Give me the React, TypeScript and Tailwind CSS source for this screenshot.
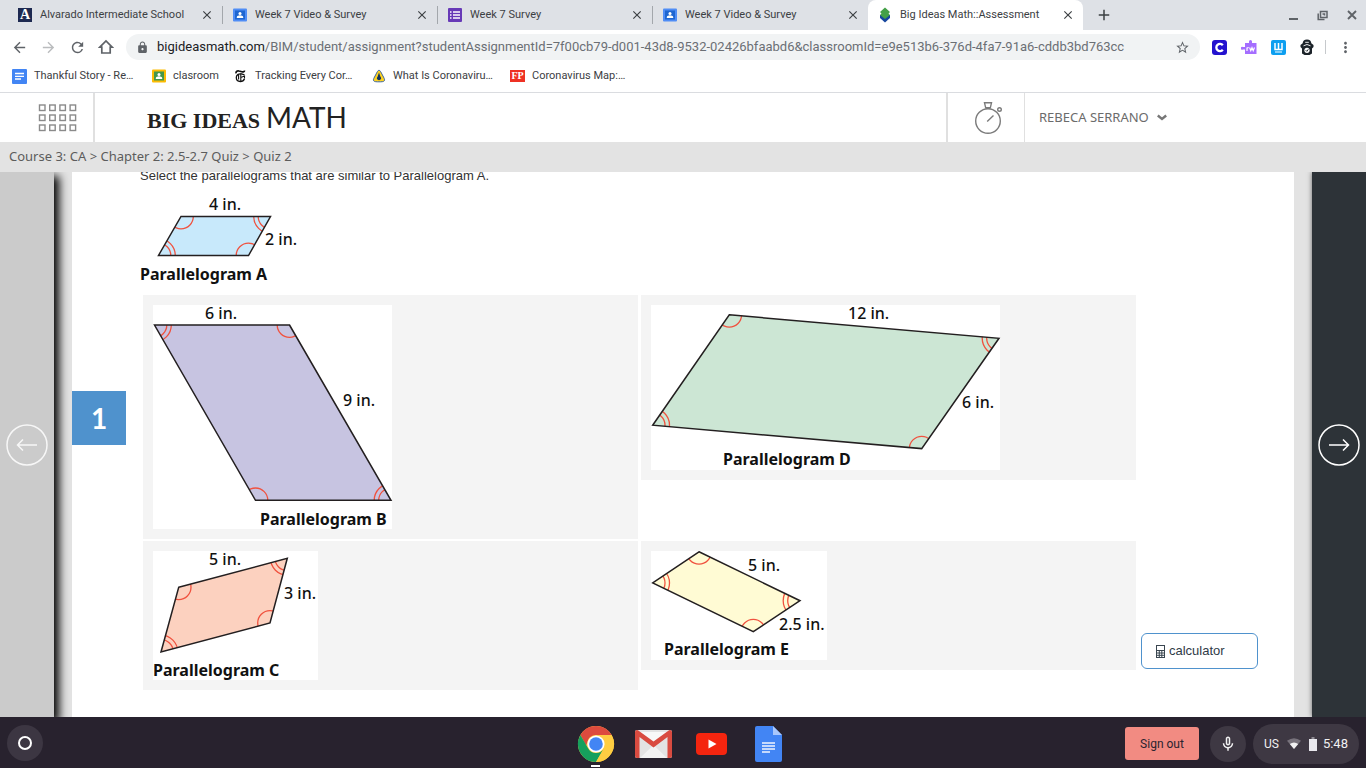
import React, { useState } from "react";
import {
  MdArrowBack,
  MdArrowForward,
  MdClose,
  MdAdd,
  MdRefresh,
  MdLock,
  MdStarBorder,
  MdMoreVert,
  MdOutlineMicNone,
} from "react-icons/md";

type Point = [number, number];

type Label = { x: number; y: number; text: string };

type FigureData = {
  name: string;
  width: number;
  height: number;
  fill: string;
  // The first and third points carry single arcs, the second and fourth double arcs.
  points: Point[];
  labels: Label[];
  caption: Label;
};

const figures: Record<string, FigureData> = {
  A: {
    name: "Parallelogram A",
    width: 162,
    height: 92,
    fill: "#c8e9fb",
    points: [[41, 21.5], [130.5, 21.5], [108.5, 60.5], [18.5, 60.5]],
    labels: [{ x: 69, y: 15, text: "4 in." }, { x: 125, y: 50, text: "2 in." }],
    caption: { x: 0, y: 85, text: "Parallelogram A" },
  },
  B: {
    name: "Parallelogram B",
    width: 239,
    height: 224,
    fill: "#c7c4e1",
    points: [[136.5, 20], [238, 195.3], [102.5, 195.3], [1.5, 20]],
    labels: [{ x: 52, y: 14, text: "6 in." }, { x: 190, y: 101, text: "9 in." }],
    caption: { x: 107, y: 220, text: "Parallelogram B" },
  },
  C: {
    name: "Parallelogram C",
    width: 165,
    height: 129,
    fill: "#fcd1bf",
    points: [[25.7, 36.3], [134.3, 7.3], [117, 72], [8, 101]],
    labels: [{ x: 56, y: 14, text: "5 in." }, { x: 131, y: 48, text: "3 in." }],
    caption: { x: 0, y: 125, text: "Parallelogram C" },
  },
  D: {
    name: "Parallelogram D",
    width: 349,
    height: 165,
    fill: "#cce6d4",
    points: [[78.3, 9.8], [348, 33.3], [270.7, 143.6], [1.7, 120.2]],
    labels: [{ x: 197, y: 14, text: "12 in." }, { x: 311, y: 103, text: "6 in." }],
    caption: { x: 72, y: 160, text: "Parallelogram D" },
  },
  E: {
    name: "Parallelogram E",
    width: 176,
    height: 109,
    fill: "#fffbd4",
    points: [[48, 0.8], [149, 49.7], [102.3, 80.7], [1.7, 32]],
    labels: [{ x: 97, y: 20, text: "5 in." }, { x: 128, y: 79, text: "2.5 in." }],
    caption: { x: 13, y: 104, text: "Parallelogram E" },
  },
};

function Figure({ data }: { data: FigureData }) {
  const clip = "clip-" + data.name.slice(-1);
  const outline = data.points.map((p) => p.join(",")).join(" ");
  return (
    <svg
      width={data.width}
      height={data.height}
      viewBox={`0 0 ${data.width} ${data.height}`}
      role="img"
      aria-label={data.name}
      className="block overflow-visible bg-white font-['Noto_Sans','Open_Sans',sans-serif]"
    >
      <clipPath id={clip}>
        <polygon points={outline} />
      </clipPath>
      <polygon points={outline} fill={data.fill} />
      <g clipPath={`url(#${clip})`} fill="none" stroke="#f0523f" strokeWidth="1.3">
        {data.points.map(([x, y], i) => (
          <g key={i}>
            <circle cx={x} cy={y} r="12.3" />
            {i % 2 === 1 && <circle cx={x} cy={y} r="16.8" />}
          </g>
        ))}
      </g>
      <polygon points={outline} fill="none" stroke="#231f20" strokeWidth="1.5" />
      {data.labels.map((l) => (
        <text key={l.text} x={l.x} y={l.y} fill="#111" className="text-[16px] font-medium">
          {l.text}
        </text>
      ))}
      <text x={data.caption.x} y={data.caption.y} fill="#111" className="text-[16px] font-bold">
        {data.caption.text}
      </text>
    </svg>
  );
}

/* ---------- favicons ---------- */

const AlvaradoIcon = () => (
  <span className="flex size-3.5 items-center justify-center bg-[#1d2951] font-['Liberation_Serif',serif] text-[14px] leading-none font-bold text-white">A</span>
);

const PersonIcon = ({ color, board }: { color: string; board: string }) => (
  <svg width="14" height="14" viewBox="0 0 14 14">
    <rect width="14" height="13" y=".5" rx="1" fill={board} />
    <rect x="2" y="2.5" width="10" height="9" fill={color} />
    <circle cx="7" cy="5.4" r="1.5" fill="#fff" />
    <path d="M3.8 10V9c0-1 1.8-1.7 3.2-1.7s3.2.7 3.2 1.7v1z" fill="#fff" />
  </svg>
);

const FormsIcon = () => (
  <svg width="14" height="14" viewBox="0 0 14 14">
    <rect width="14" height="14" rx="1" fill="#673ab7" />
    <path d="M2 4h1.5M5 4h7M2 7h1.5M5 7h7M2 10h1.5M5 10h7" stroke="#fff" strokeWidth="1.6" />
  </svg>
);

const BigIdeasIcon = () => (
  <svg width="14" height="16" viewBox="0 0 14 16">
    <path d="M7 15.5 2 11V8h10v3z" fill="#17479e" />
    <path d="M7 .5 2 5l1.5 1.6L2 8l5 4 5-4-1.5-1.4L12 5z" fill="#43a047" />
  </svg>
);

const DocsIcon = () => (
  <svg width="15" height="15" viewBox="0 0 15 15">
    <rect width="15" height="15" rx="1" fill="#4285f4" />
    <path d="M3 4.5h9M3 7.3h9M3 10h6" stroke="#fff" strokeWidth="1.3" />
  </svg>
);

const TimesIcon = () => (
  <svg width="11" height="14" viewBox="0 0 11 14" fill="none" stroke="#111">
    <path d="M1 4.300C.8 2.200 2.400 1.500 4 2l2.800.8c1.500.4 2.700 0 2.700-1.300" strokeWidth="1.700" />
    <path d="M9.500 5.800 6.500 4.900C3.500 4.300 1.300 6.200 1.300 8.600c0 2.300 1.700 3.900 4 3.900 2.100 0 3.600-1.200 4.200-2.800" strokeWidth="1.300" />
    <path d="M5.800 4.500v7.500M3.600 6v4.500M5.800 8.600l3.700-1.500v2.500" strokeWidth="1.100" />
  </svg>
);

const TriangleIcon = () => (
  <svg width="14" height="14" viewBox="0 0 14 14">
    <path d="M7 1.2c1 0 2 2 3.4 4.800 1.700 3 2.600 4.600 2 5.700-.8 1.200-3 1.100-5.400 1.100s-4.600.1-5.400-1.100c-.6-1.100.3-2.700 2-5.700C5 3.200 6 1.200 7 1.200z" fill="#ffd21f" stroke="#3b67a5" />
    <path d="M7 3.600 9.200 10H4.800z" fill="#12345f" />
    <circle cx="7" cy="9.300" r="1.900" fill="#12345f" />
  </svg>
);

const FpIcon = () => (
  <span className="flex h-3 w-[15px] items-center justify-center bg-[#ee3124] font-['Liberation_Serif',serif] text-[10px] leading-none font-bold text-white">FP</span>
);

/* ---------- browser frame ---------- */

const tabs = [
  { title: "Alvarado Intermediate School", icon: <AlvaradoIcon /> },
  { title: "Week 7 Video & Survey", icon: <PersonIcon board="#4f8df5" color="#1e66d0" /> },
  { title: "Week 7 Survey", icon: <FormsIcon /> },
  { title: "Week 7 Video & Survey", icon: <PersonIcon board="#4f8df5" color="#1e66d0" /> },
  { title: "Big Ideas Math::Assessment", icon: <BigIdeasIcon /> },
];

function TabStrip() {
  return (
    <div className="flex h-[30px] shrink-0 items-stretch bg-[#dee1e6] pl-2">
      {tabs.map((t, i) => {
        const active = i === tabs.length - 1;
        return (
          <div
            key={i}
            className={
              "flex w-[215px] items-center gap-2 pr-2 pl-2.5 " + (active ? "rounded-t-lg bg-white" : "")
            }
          >
            <span className="flex w-3.5 shrink-0 justify-center">{t.icon}</span>
            <a href="#" className="flex-1 truncate text-[11px] text-[#3c4043]">
              {t.title}
            </a>
            <button type="button" aria-label="Close tab" className="text-[14px] text-[#3c4043]">
              <MdClose />
            </button>
            {i < 3 && <span className="-mr-2 h-[18px] w-px bg-[#a3a7ac]" />}
          </div>
        );
      })}
      <button type="button" aria-label="New tab" className="ml-3 text-[18px] text-[#3c4043]">
        <MdAdd />
      </button>
      <div className="ml-auto flex items-center gap-[18px] pr-2 text-[#5f6368]">
        <button type="button" aria-label="Minimise">
          <svg width="11" height="12" viewBox="0 0 11 12">
            <path d="M1 10h9" stroke="currentColor" strokeWidth="2" />
          </svg>
        </button>
        <button type="button" aria-label="Restore">
          <svg width="11" height="11" viewBox="0 0 11 11" fill="none" stroke="currentColor" strokeWidth="1.5">
            <rect x="3.500" y="1.500" width="6.500" height="6" />
            <path d="M1.200 3.500v6h6.300M5.500 4h2v1.500" />
          </svg>
        </button>
        <button type="button" aria-label="Close window">
          <svg width="12" height="12" viewBox="0 0 12 12" stroke="currentColor" strokeWidth="1.900">
            <path d="m2 2 8 8M10 2l-8 8" />
          </svg>
        </button>
      </div>
    </div>
  );
}

function Extensions() {
  return (
    <div className="flex items-center gap-3.5">
      <button type="button" aria-label="Clever">
        <svg width="15" height="15" viewBox="0 0 15 15">
          <rect width="15" height="15" rx="3" fill="#2412cf" />
          <path d="M10.800 5.300A3.600 3.600 0 1 0 10.800 9.700" fill="none" stroke="#fff" strokeWidth="2.300" />
        </svg>
      </button>
      <button type="button" aria-label="Read and write">
        <svg width="16" height="16" viewBox="0 0 16 16">
          <path d="M4 4h4V2.500a1.500 1.500 0 1 1 3 0V4h4.500v11H4v-4.500H2a1.500 1.500 0 1 1 0-2.500h2z" fill="#a56eff" />
          <path d="M6 12V8.500M6 9.500q.5-1 1.700-1M8.600 8.500l1.200 3.200 1.200-3 1.200 3 1.300-3.200" fill="none" stroke="#fff" strokeWidth="1.200" />
        </svg>
      </button>
      <button type="button" aria-label="Reading tools">
        <svg width="15" height="15" viewBox="0 0 15 15">
          <rect width="15" height="15" rx="2" fill="#0d9ff0" />
          <path d="M4 3v6.500h7V3M7.500 3v6" fill="none" stroke="#fff" strokeWidth="1.500" />
          <path d="M4 12h7" stroke="#fff" />
        </svg>
      </button>
      <button type="button" aria-label="Guard">
        <svg width="14" height="16" viewBox="0 0 14 16">
          <path d="M7 .5c2.800 0 4.200 1.600 4.300 3.800L13.500 6v2L12 9.500v5L9.500 16h-5L2 14.500v-5L.5 8V6l2.200-1.700C2.800 2.100 4.200.5 7 .5z" fill="#1c2329" />
          <path d="M3.500 6.800Q7 4.200 10.500 6.800M5.200 3.300h3.600" fill="none" stroke="#fff" strokeWidth=".9" />
          <circle cx="7" cy="11.300" r="2.600" fill="#fff" />
          <path d="m5.800 11.300 1 1 1.500-2" fill="none" stroke="#1c2329" />
        </svg>
      </button>
    </div>
  );
}

function Toolbar() {
  return (
    <div className="flex h-[34px] shrink-0 items-center bg-white pr-3 pl-[11px]">
      <div className="flex items-center gap-3 text-[17px] text-[#5f6368]">
        <button type="button" aria-label="Back"><MdArrowBack /></button>
        <button type="button" aria-label="Forward" className="text-[#babcbe]"><MdArrowForward /></button>
        <button type="button" aria-label="Reload"><MdRefresh /></button>
        <button type="button" aria-label="Home">
          <svg width="16" height="16" viewBox="0 0 16 16" fill="none" stroke="currentColor" strokeWidth="1.700">
            <path d="M1.800 8.200 8 2l6.200 6.200h-2V14H3.800V8.200z" />
          </svg>
        </button>
      </div>
      <div className="ml-3 flex h-[26px] flex-1 items-center rounded-full bg-[#f1f3f4] pr-2.5 pl-2.5 text-[13px]">
        <MdLock className="mr-2 shrink-0 text-[#5f6368]" />
        <label htmlFor="address" className="text-[#202124]">bigideasmath.com</label>
        <input
          id="address"
          type="text"
          defaultValue="/BIM/student/assignment?studentAssignmentId=7f00cb79-d001-43d8-9532-02426bfaabd6&classroomId=e9e513b6-376d-4fa7-91a6-cddb3bd763cc"
          className="min-w-0 flex-1 bg-transparent text-[#6b6f74] outline-none"
        />
        <button type="button" aria-label="Bookmark this page" className="text-[15px] text-[#5f6368]">
          <MdStarBorder />
        </button>
      </div>
      <div className="ml-3">
        <Extensions />
      </div>
      <span className="mx-[11px] h-3.5 w-px bg-[#c6c9cc]" />
      <button type="button" aria-label="Browser menu" className="text-[17px] text-[#5f6368]">
        <MdMoreVert />
      </button>
    </div>
  );
}

const bookmarks = [
  { title: "Thankful Story - Re…", icon: <DocsIcon />, width: "w-[139px]" },
  { title: "clasroom", icon: <PersonIcon board="#fbbc04" color="#43964c" />, width: "w-[82px]" },
  { title: "Tracking Every Cor…", icon: <TimesIcon />, width: "w-[138px]" },
  { title: "What Is Coronaviru…", icon: <TriangleIcon />, width: "w-[139px]" },
  { title: "Coronavirus Map:…", icon: <FpIcon />, width: "w-[138px]" },
];

function Bookmarks() {
  return (
    <div className="flex h-[29px] shrink-0 items-start border-b border-[#dadce0] bg-white pt-1 pl-3">
      {bookmarks.map((b) => (
        <a key={b.title} href="#" className={"flex items-center gap-[7px] text-[11px] leading-4 whitespace-nowrap text-[#3c4043] " + b.width}>
          <span className="flex w-[15px] shrink-0 justify-center">{b.icon}</span>
          {b.title}
        </a>
      ))}
    </div>
  );
}

/* ---------- Big Ideas Math page ---------- */

function SiteHeader() {
  return (
    <header className="flex h-[49px] shrink-0 items-stretch bg-white">
      <button type="button" aria-label="Apps" className="flex w-[95px] items-center justify-end border-r-2 border-[#e0e0e0] pr-4">
        <svg width="39" height="28" viewBox="0 0 39 28" fill="none" stroke="#8a8a8a" strokeWidth="1.400">
          {[0, 1, 2].map((r) =>
            [0, 1, 2, 3].map((c) => <rect key={r + "-" + c} x={1.500 + c * 10.200} y={1 + r * 10} width="5.500" height="5.500" />)
          )}
        </svg>
      </button>
      <h1 className="ml-[52px] flex items-baseline gap-1.5 text-[#222] leading-[49px]">
        <span className="font-['Liberation_Serif',serif] text-[22px] font-bold">BIG IDEAS</span>
        <span className="font-['Lato',sans-serif] text-[28px]">MATH</span>
      </h1>
      <button type="button" aria-label="Timer" className="ml-auto flex w-[79px] items-center justify-center border-r border-l-2 border-[#e0e0e0]">
        <svg width="30" height="34" viewBox="0 0 30 34" fill="none" stroke="#7b7b7b" strokeWidth="1.400" className="ml-1.5">
          <circle cx="14" cy="20" r="12.300" />
          <path d="M10.500 1.800h7l-1.200 5h-4.600zM13 7v1M15 7v1M13.200 20.500l6.300-6" />
          <circle cx="25.500" cy="8.500" r="1.800" />
        </svg>
      </button>
      <button type="button" className="flex w-[341px] items-center gap-2 pl-3.5 font-['Noto_Sans','Open_Sans',sans-serif] text-[13px] text-[#6b6b6b]">
        REBECA SERRANO
        <svg width="10" height="7" viewBox="0 0 10 7" fill="none" stroke="#777" strokeWidth="2.400">
          <path d="m.8 1.500 4.200 3.500 4.200-3.500" />
        </svg>
      </button>
    </header>
  );
}

function Arrow({ back }: { back?: boolean }) {
  return (
    <svg width="42" height="42" viewBox="0 0 42 42" fill="none" stroke="currentColor" strokeWidth="1.500">
      <circle cx="21" cy="21" r="20" />
      {back ? <path d="M31 21H12M17 15.500 11.500 21l5.500 5.500" /> : <path d="M11 21h19M25 15.500l5.500 5.500-5.500 5.500" />}
    </svg>
  );
}

function Choice({ data }: { data: FigureData }) {
  const [picked, setPicked] = useState(false);
  return (
    <button
      type="button"
      aria-pressed={picked}
      onClick={() => setPicked(!picked)}
      className={"p-2.5 " + (picked ? "bg-[#d5e6f5]" : "bg-[#f4f4f4]")}
    >
      <Figure data={data} />
    </button>
  );
}

function Assessment() {
  return (
    <main className="flex min-h-0 flex-1 overflow-hidden">
      <button type="button" aria-label="Previous question" className="flex w-[54px] items-center justify-center bg-[#cbcbcb] text-[#f7f7f7] shadow-[4px_5px_9px_1px_#000]">
        <Arrow back />
      </button>
      <section className="mx-[18px] flex flex-1 items-stretch bg-white">
        <div className="w-[54px] shrink-0">
          <div className="mt-[219px] flex h-[54px] items-center justify-center bg-[#4f92cd] font-['Lato',sans-serif] text-[28px] font-bold text-white">
            1
          </div>
        </div>
        <div className="-mt-1 ml-3.5 w-[999px]">
          <p className="font-['Liberation_Sans',sans-serif] text-[13px] leading-4 text-[#333]">
            Select the parallelograms that are similar to Parallelogram A.
          </p>
          <div className="pt-[11px]">
            <Figure data={figures.A} />
          </div>
          <div className="mt-2 grid grid-cols-2 items-start gap-x-[3px] gap-y-0.5 px-[3px]">
            <Choice data={figures.B} />
            <Choice data={figures.D} />
            <Choice data={figures.C} />
            <Choice data={figures.E} />
          </div>
        </div>
        <button type="button" className="mb-12 ml-0.5 flex h-9 w-[117px] items-center gap-1 self-end rounded-md border border-[#4f92cd] pl-3.5 font-['Liberation_Sans',sans-serif] text-[13px] text-[#2f3b47]">
          <svg width="9" height="13" viewBox="0 0 9 13" fill="none" stroke="#3a4650">
            <rect x=".5" y=".5" width="8" height="12" />
            <path d="M0 5.500h9M0 8h9M0 10.300h9M3.300 5.500v7M5.800 5.500v7" />
          </svg>
          calculator
        </button>
      </section>
      <button type="button" aria-label="Next question" className="flex w-[54px] items-center justify-center bg-[#2d3338] text-white shadow-[0_0_5px_#666]">
        <Arrow />
      </button>
    </main>
  );
}

/* ---------- shelf ---------- */

function Shelf() {
  return (
    <footer className="z-10 grid h-[51px] shrink-0 grid-cols-[1fr_auto_1fr] items-center bg-[#28222e]">
      <button type="button" aria-label="Launcher" className="ml-[7px] flex size-9 items-center justify-center rounded-full bg-[#3c3642]">
        <span className="size-3.5 rounded-full border-2 border-white" />
      </button>
      <nav className="flex items-center gap-5 pt-0.5 pr-2">
        <a href="#" aria-label="Chrome" className="flex h-[49px] flex-col items-center pt-1.5">
          <svg width="38" height="38" viewBox="0 0 38 38">
            <circle cx="19" cy="19" r="18" fill="#ffcd42" />
            <path d="M3.400 10A18 18 0 0 1 34.600 10H19a9 9 0 0 0-7.800 4.500l-2 6z" fill="#dd4b3e" />
            <path d="M3.400 10A18 18 0 0 0 19 37l7.800-13.500a9 9 0 0 1-15.600 0z" fill="#16a05d" />
            <path d="M34.600 10A18 18 0 0 1 19 37l7.800-13.500A9 9 0 0 0 19 10z" fill="#ffcd42" />
            <circle cx="19" cy="19" r="8.600" fill="#fff" />
            <circle cx="19" cy="19" r="6.800" fill="#4285f4" />
          </svg>
          <span className="mt-0.5 h-0.5 w-[9px] bg-white" />
        </a>
        <a href="#" aria-label="Gmail">
          <svg width="37" height="28" viewBox="0 0 37 28">
            <rect width="37" height="28" rx="2" fill="#e3e3e3" />
            <path d="M5 28 18.500 15 32 28z" fill="#f2f2f2" />
            <path d="M5 2h27L18.500 12z" fill="#f8f8f8" />
            <path d="M0 2a2 2 0 0 1 3.300-1.500L18.500 11.500 33.700.5A2 2 0 0 1 37 2v24a2 2 0 0 1-2 2h-2.500V7L18.500 17.500 4.500 7v21H2a2 2 0 0 1-2-2z" fill="#d94b40" />
          </svg>
        </a>
        <a href="#" aria-label="YouTube" className="ml-1">
          <svg width="31" height="22" viewBox="0 0 31 22">
            <rect width="31" height="22" rx="4" fill="#f4250f" />
            <path d="m12.500 6.500 8 4.500-8 4.500z" fill="#fff" />
          </svg>
        </a>
        <a href="#" aria-label="Docs" className="ml-2">
          <svg width="27" height="36" viewBox="0 0 27 36">
            <path d="M2 0h16l9 9v25a2 2 0 0 1-2 2H2a2 2 0 0 1-2-2V2a2 2 0 0 1 2-2z" fill="#4285f4" />
            <path d="M18 0v9h9z" fill="#a9c7fb" />
            <path d="M7 17h13M7 20h13M7 23h13M7 26h8" stroke="#f1f5fe" strokeWidth="1.400" />
          </svg>
        </a>
      </nav>
      <div className="flex items-center justify-end pt-0.5 pr-[7px] text-[#f1f1f2]">
        <button type="button" className="h-[33px] w-[74px] rounded-[3px] bg-[#f28b82] text-[12px] text-[#2b2430]">
          Sign out
        </button>
        <button type="button" aria-label="Dictation" className="ml-[11px] flex size-9 items-center justify-center rounded-full bg-[#3e3843] text-[18px]">
          <MdOutlineMicNone />
        </button>
        <button type="button" className="ml-[7px] flex h-10 w-[106px] items-center justify-center rounded-full bg-[#3e3843] text-[12px]">
          US
          <svg width="14" height="11" viewBox="0 0 14 11" className="ml-2">
            <path d="M7 11 0 2.800Q7-2.300 14 2.800z" fill="#77727b" />
            <path d="M7 11 2.800 6Q7 3 11.200 6z" fill="#f1f1f2" />
          </svg>
          <svg width="8" height="14" viewBox="0 0 8 14" className="ml-2">
            <path d="M2.500 0h3v2h-3z" fill="#8d8991" />
            <path d="M0 2h8v12H0z" fill="#e9e8ee" />
          </svg>
          <span className="ml-1.5 text-[13px]">5:48</span>
        </button>
      </div>
    </footer>
  );
}

export default function App() {
  return (
    <div className="flex h-screen flex-col overflow-hidden bg-[#e3e3e3] font-['Roboto',sans-serif]">
      <TabStrip />
      <Toolbar />
      <Bookmarks />
      <SiteHeader />
      <nav className="flex h-[30px] shrink-0 items-center pl-[9px] font-['Noto_Sans','Open_Sans',sans-serif] text-[13px] text-[#5c5c5c]">
        Course 3: CA &gt; Chapter 2: 2.5-2.7 Quiz &gt; Quiz 2
      </nav>
      <Assessment />
      <Shelf />
    </div>
  );
}
